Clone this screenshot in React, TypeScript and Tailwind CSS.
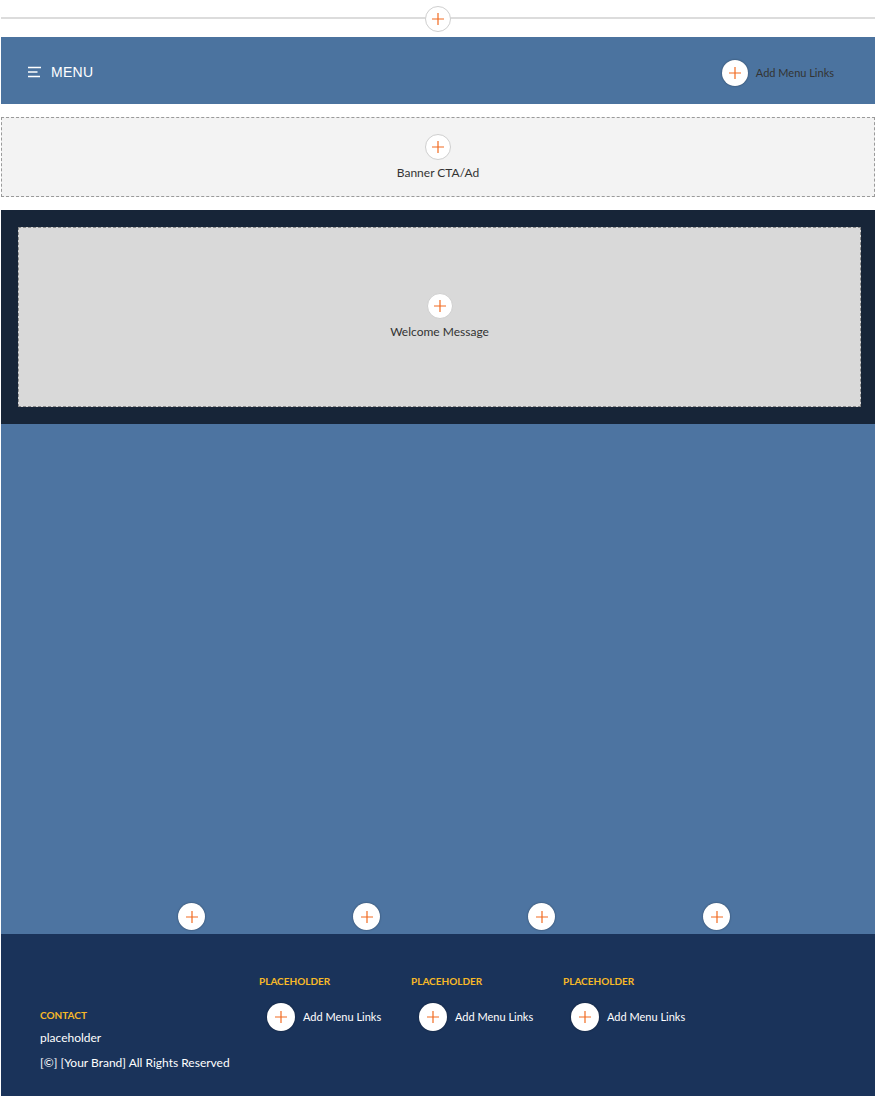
import React from 'react';

type PlusProps = {
  size?: number;
  ring?: 'border' | 'shadow';
};

// round white "add" button with thin orange cross
function PlusButton({ size = 26, ring = 'border' }: PlusProps) {
  return (
    <div
      className={`flex shrink-0 items-center justify-center rounded-full bg-white ${
        ring === 'border' ? 'border border-[#cfcfcf]' : 'shadow-[0_0_2px_rgba(0,0,0,0.45)]'
      }`}
      style={{ width: size, height: size }}
    >
      <svg width="14" height="14" viewBox="0 0 14 14">
        <path d="M7 1v12M1 7h12" stroke="#f26b21" strokeWidth="1.2" fill="none" />
      </svg>
    </div>
  );
}

function AddLinks({ dark }: { dark?: boolean }) {
  return (
    <div className="flex items-center gap-2">
      <PlusButton size={dark ? 26 : 28} ring="shadow" />
      <span className={`text-[11px] ${dark ? 'text-[#333]' : 'text-white'}`}>Add Menu Links</span>
    </div>
  );
}

const columns = ['PLACEHOLDER', 'PLACEHOLDER', 'PLACEHOLDER'];

export default function App() {
  return (
    <div className="w-[875px] bg-white pl-px font-['Lato','Open_Sans',sans-serif]">
      {/* top insert line */}
      <div className="relative flex h-[37px] items-center justify-center">
        <div className="absolute left-0 right-0 top-[17px] h-[2px] bg-[#dcdcdc]" />
        <div className="relative">
          <PlusButton />
        </div>
      </div>

      {/* header */}
      <header className="flex h-[67px] items-center justify-between bg-[#4b739f] pl-[27px] pr-[41px] pt-[3px]">
        <div className="flex items-center gap-[10px]">
          <svg width="13" height="12" viewBox="0 0 13 12">
            <path d="M0 1.5h13M0 6h9.5M0 10.5h12" stroke="white" strokeWidth="1.4" />
          </svg>
          <span className="font-['Liberation_Sans',sans-serif] text-[14px] tracking-[0.3px] text-white">MENU</span>
        </div>
        <div className="mt-[2px]">
          <AddLinks dark />
        </div>
      </header>

      <div className="h-[13px]" />

      {/* banner slot */}
      <section className="flex h-[80px] flex-col items-center border border-dashed border-[#9a9a9a] bg-[#f3f3f3] pt-[16px]">
        <PlusButton />
        <p className="mt-[4px] text-[12px] text-[#333]">Banner CTA/Ad</p>
      </section>

      <div className="h-[13px]" />

      {/* welcome */}
      <section className="bg-[#172538] py-[17px] pl-[17px] pr-[14px]">
        <div className="flex h-[180px] flex-col items-center border border-dashed border-[#8a8a8a] bg-[#d9d9d9] pt-[65px]">
          <PlusButton />
          <p className="mt-[4px] text-[12px] text-[#333]">Welcome Message</p>
        </div>
      </section>

      {/* content area */}
      <section className="flex h-[510px] flex-col justify-end bg-[#4d74a1] pb-[4px]">
        <div className="flex gap-[148px] pl-[177px]">
          {[0, 1, 2, 3].map((i) => (
            <PlusButton key={i} size={27} ring="shadow" />
          ))}
        </div>
      </section>

      {/* footer */}
      <footer className="flex h-[162px] items-start bg-[#1a335a] pl-[39px]">
        <div className="w-[219px] pt-[74px]">
          <h4 className="text-[10px] font-bold leading-[14px] text-[#f7b928]">CONTACT</h4>
          <p className="mt-[8px] text-[12px] leading-[16px] text-white">placeholder</p>
          <p className="mt-[9px] text-[12px] leading-[16px] text-white">[©] [Your Brand] All Rights Reserved</p>
        </div>
        {columns.map((c, i) => (
          <div key={i} className="w-[152px] pt-[40px]">
            <h4 className="text-[10px] font-bold leading-[14px] text-[#f7b928]">{c}</h4>
            <div className="mt-[15px] pl-[8px]">
              <AddLinks />
            </div>
          </div>
        ))}
      </footer>
    </div>
  );
}
